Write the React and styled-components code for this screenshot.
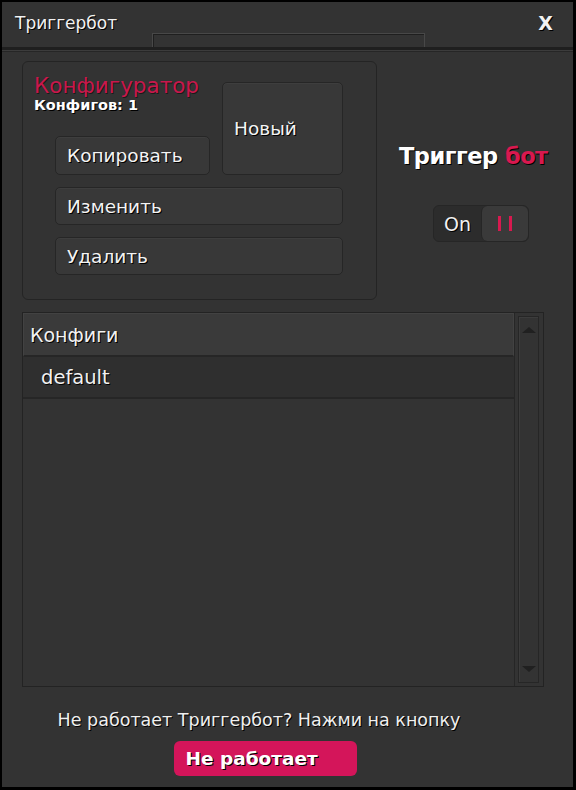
import styled, { createGlobalStyle } from 'styled-components';

const GlobalStyle = createGlobalStyle`
  html, body {
    margin: 0;
    padding: 0;
    background: #000;
  }
  body {
    font-family: 'DejaVu Sans', Verdana, sans-serif;
  }
`;

const Window = styled.div`
  box-sizing: border-box;
  width: 576px;
  height: 790px;
  background: #333333;
  border: 2px solid #000;
  border-right-width: 3px;
  border-bottom-width: 3px;
  display: flex;
  flex-direction: column;
  color: #f2f2f2;
`;

const TitleBar = styled.div`
  height: 45px;
  display: flex;
  align-items: stretch;
  padding: 0 20px 0 13px;
  border-bottom: 3px solid #1f1f1f;
  box-shadow: 0 1px 0 #3c3c3c, 0 2px 0 #262626;
`;

const Title = styled.div`
  width: 137px;
  display: flex;
  align-items: center;
  padding-bottom: 4px;
  font-size: 17px;
  text-shadow: 1px 1px 0 #000;
`;

const TitleTab = styled.div`
  align-self: flex-end;
  width: 271px;
  height: 13px;
  border: 1px solid #484848;
  border-bottom: none;
  box-shadow: inset 1px 1px 0 #1f1f1f;
`;

const CloseButton = styled.div`
  margin-left: auto;
  display: flex;
  align-items: center;
  padding-bottom: 4px;
  font-size: 19px;
  font-weight: bold;
  text-shadow: 1px 1px 0 #000;
`;

const Body = styled.div`
  flex: 1;
  display: flex;
  flex-direction: column;
  padding: 11px 29px 0 20px;
`;

const TopRow = styled.div`
  display: flex;
`;

const GroupBox = styled.div`
  box-sizing: border-box;
  flex: 0 0 355px;
  height: 239px;
  border: 1px solid #242424;
  border-radius: 6px;
  padding: 12px 0 0 11px;
  display: grid;
  grid-template-columns: 9px 155px 121px;
  grid-template-rows: 50px 39px 38px 38px;
  column-gap: 12px;
  row-gap: 12px;
  align-content: start;
`;

const GroupHeader = styled.div`
  grid-column: 1 / 4;
  grid-row: 1;
  display: flex;
  flex-direction: column;
  position: relative;
  z-index: 1;
  pointer-events: none;
`;

const GroupTitle = styled.div`
  font-size: 21.5px;
  line-height: 23px;
  color: #c8184c;
  text-shadow: 1px 1px 0 #1a1a1a;
`;

const GroupCount = styled.div`
  font-size: 14.5px;
  font-weight: bold;
  line-height: 16px;
  color: #fff;
  text-shadow: 1px 1px 0 #000;
`;

const Button = styled.div`
  box-sizing: border-box;
  grid-column: ${({ $col }) => $col};
  grid-row: ${({ $row }) => $row};
  margin-top: ${({ $offset }) => $offset || 0}px;
  background: #383838;
  border: 1px solid #262626;
  border-radius: 5px;
  box-shadow: inset 0 1px 0 #3e3e3e;
  display: flex;
  align-items: center;
  padding-left: 11px;
  font-size: 18.5px;
  color: #f4f4f4;
  text-shadow: 1px 1px 0 #000;
`;

const SidePanel = styled.div`
  flex: 1;
  display: flex;
  flex-direction: column;
  align-items: center;
  padding-top: 82px;
  padding-left: 38px;
`;

const BrandTitle = styled.div`
  font-size: 22.5px;
  font-weight: bold;
  color: #fff;
  white-space: nowrap;
  letter-spacing: -0.5px;
  text-shadow: 1px 1px 0 #000;
  margin-left: -16px;
`;

const Accent = styled.span`
  color: #d8194f;
`;

const Toggle = styled.div`
  margin-top: 36px;
  display: flex;
  width: 96px;
  height: 37px;
  box-sizing: border-box;
  border: 1px solid #262626;
  border-radius: 6px;
  background: #2c2c2c;
  overflow: hidden;
`;

const ToggleHalf = styled.div`
  flex: 1;
  display: flex;
  align-items: center;
  justify-content: center;
  font-size: 19px;
  color: ${({ $active }) => ($active ? '#d8194f' : '#f2f2f2')};
  background: ${({ $active }) => ($active ? '#3a3a3a' : 'transparent')};
  border-left: ${({ $active }) => ($active ? '1px solid #262626' : 'none')};
  border-radius: ${({ $active }) => ($active ? '6px' : '0')};
  text-shadow: 1px 1px 0 #000;
`;

const PauseBars = styled.div`
  display: flex;
  gap: 8px;
  & > span {
    width: 3px;
    height: 15px;
    background: #d8194f;
  }
`;

const ListArea = styled.div`
  margin-top: 12px;
  height: 375px;
  display: flex;
  border: 1px solid #232323;
  box-sizing: border-box;
`;

const List = styled.div`
  flex: 1;
  display: flex;
  flex-direction: column;
  border-right: 1px solid #262626;
`;

const ListHeader = styled.div`
  height: 41px;
  display: flex;
  align-items: center;
  padding-left: 6px;
  background: #3a3a3a;
  border: 1px solid #424242;
  border-bottom: 2px solid #262626;
  font-size: 19px;
  color: #f2f2f2;
  text-shadow: 1px 1px 0 #000;
`;

const ListRow = styled.div`
  height: 40px;
  display: flex;
  align-items: center;
  padding-left: 18px;
  background: #2f2f2f;
  border-bottom: 2px solid #262626;
  font-size: 19.5px;
  color: #f2f2f2;
  text-shadow: 1px 1px 0 #000;
`;

const ScrollBar = styled.div`
  width: 28px;
  display: flex;
  padding: 3px 4px 3px 3px;
  box-sizing: border-box;
`;

const ScrollTrack = styled.div`
  flex: 1;
  border: 1px solid #262626;
  box-shadow: inset 1px 1px 0 #3c3c3c;
  display: flex;
  flex-direction: column;
  justify-content: space-between;
  align-items: center;
  padding: 10px 0;
`;

const Arrow = styled.div`
  width: 0;
  height: 0;
  border-left: 7px solid transparent;
  border-right: 7px solid transparent;
  ${({ $down }) =>
    $down ? 'border-top: 6px solid #202020;' : 'border-bottom: 6px solid #202020;'}
`;

const Footer = styled.div`
  display: flex;
  flex-direction: column;
  align-items: center;
  padding-top: 23px;
  padding-right: 48px;
`;

const FooterText = styled.div`
  font-size: 17.5px;
  color: #f0f0f0;
  white-space: nowrap;
  text-shadow: 1px 1px 0 #000;
`;

const DangerButton = styled.div`
  margin-top: 11px;
  margin-left: 12px;
  width: 183px;
  height: 35px;
  box-sizing: border-box;
  background: #d4155a;
  border-radius: 6px;
  display: flex;
  align-items: center;
  padding-left: 12px;
  font-size: 18.5px;
  font-weight: bold;
  color: #fff;
  white-space: nowrap;
  text-shadow: 1px 1px 0 #000;
`;

export default function App() {
  return (
    <>
      <GlobalStyle />
      <Window>
        <TitleBar>
          <Title>Триггербот</Title>
          <TitleTab />
          <CloseButton>X</CloseButton>
        </TitleBar>
        <Body>
          <TopRow>
            <GroupBox>
              <GroupHeader>
                <GroupTitle>Конфигуратор</GroupTitle>
                <GroupCount>Конфигов: 1</GroupCount>
              </GroupHeader>
              <Button $col="3" $row="1 / 3" $offset={8}>
                Новый
              </Button>
              <Button $col="2" $row="2">Копировать</Button>
              <Button $col="2 / 4" $row="3">Изменить</Button>
              <Button $col="2 / 4" $row="4">Удалить</Button>
            </GroupBox>
            <SidePanel>
              <BrandTitle>
                Триггер <Accent>бот</Accent>
              </BrandTitle>
              <Toggle>
                <ToggleHalf>On</ToggleHalf>
                <ToggleHalf $active>
                  <PauseBars>
                    <span />
                    <span />
                  </PauseBars>
                </ToggleHalf>
              </Toggle>
            </SidePanel>
          </TopRow>
          <ListArea>
            <List>
              <ListHeader>Конфиги</ListHeader>
              <ListRow>default</ListRow>
            </List>
            <ScrollBar>
              <ScrollTrack>
                <Arrow />
                <Arrow $down />
              </ScrollTrack>
            </ScrollBar>
          </ListArea>
          <Footer>
            <FooterText>Не работает Триггербот? Нажми на кнопку</FooterText>
            <DangerButton>Не работает</DangerButton>
          </Footer>
        </Body>
      </Window>
    </>
  );
}
